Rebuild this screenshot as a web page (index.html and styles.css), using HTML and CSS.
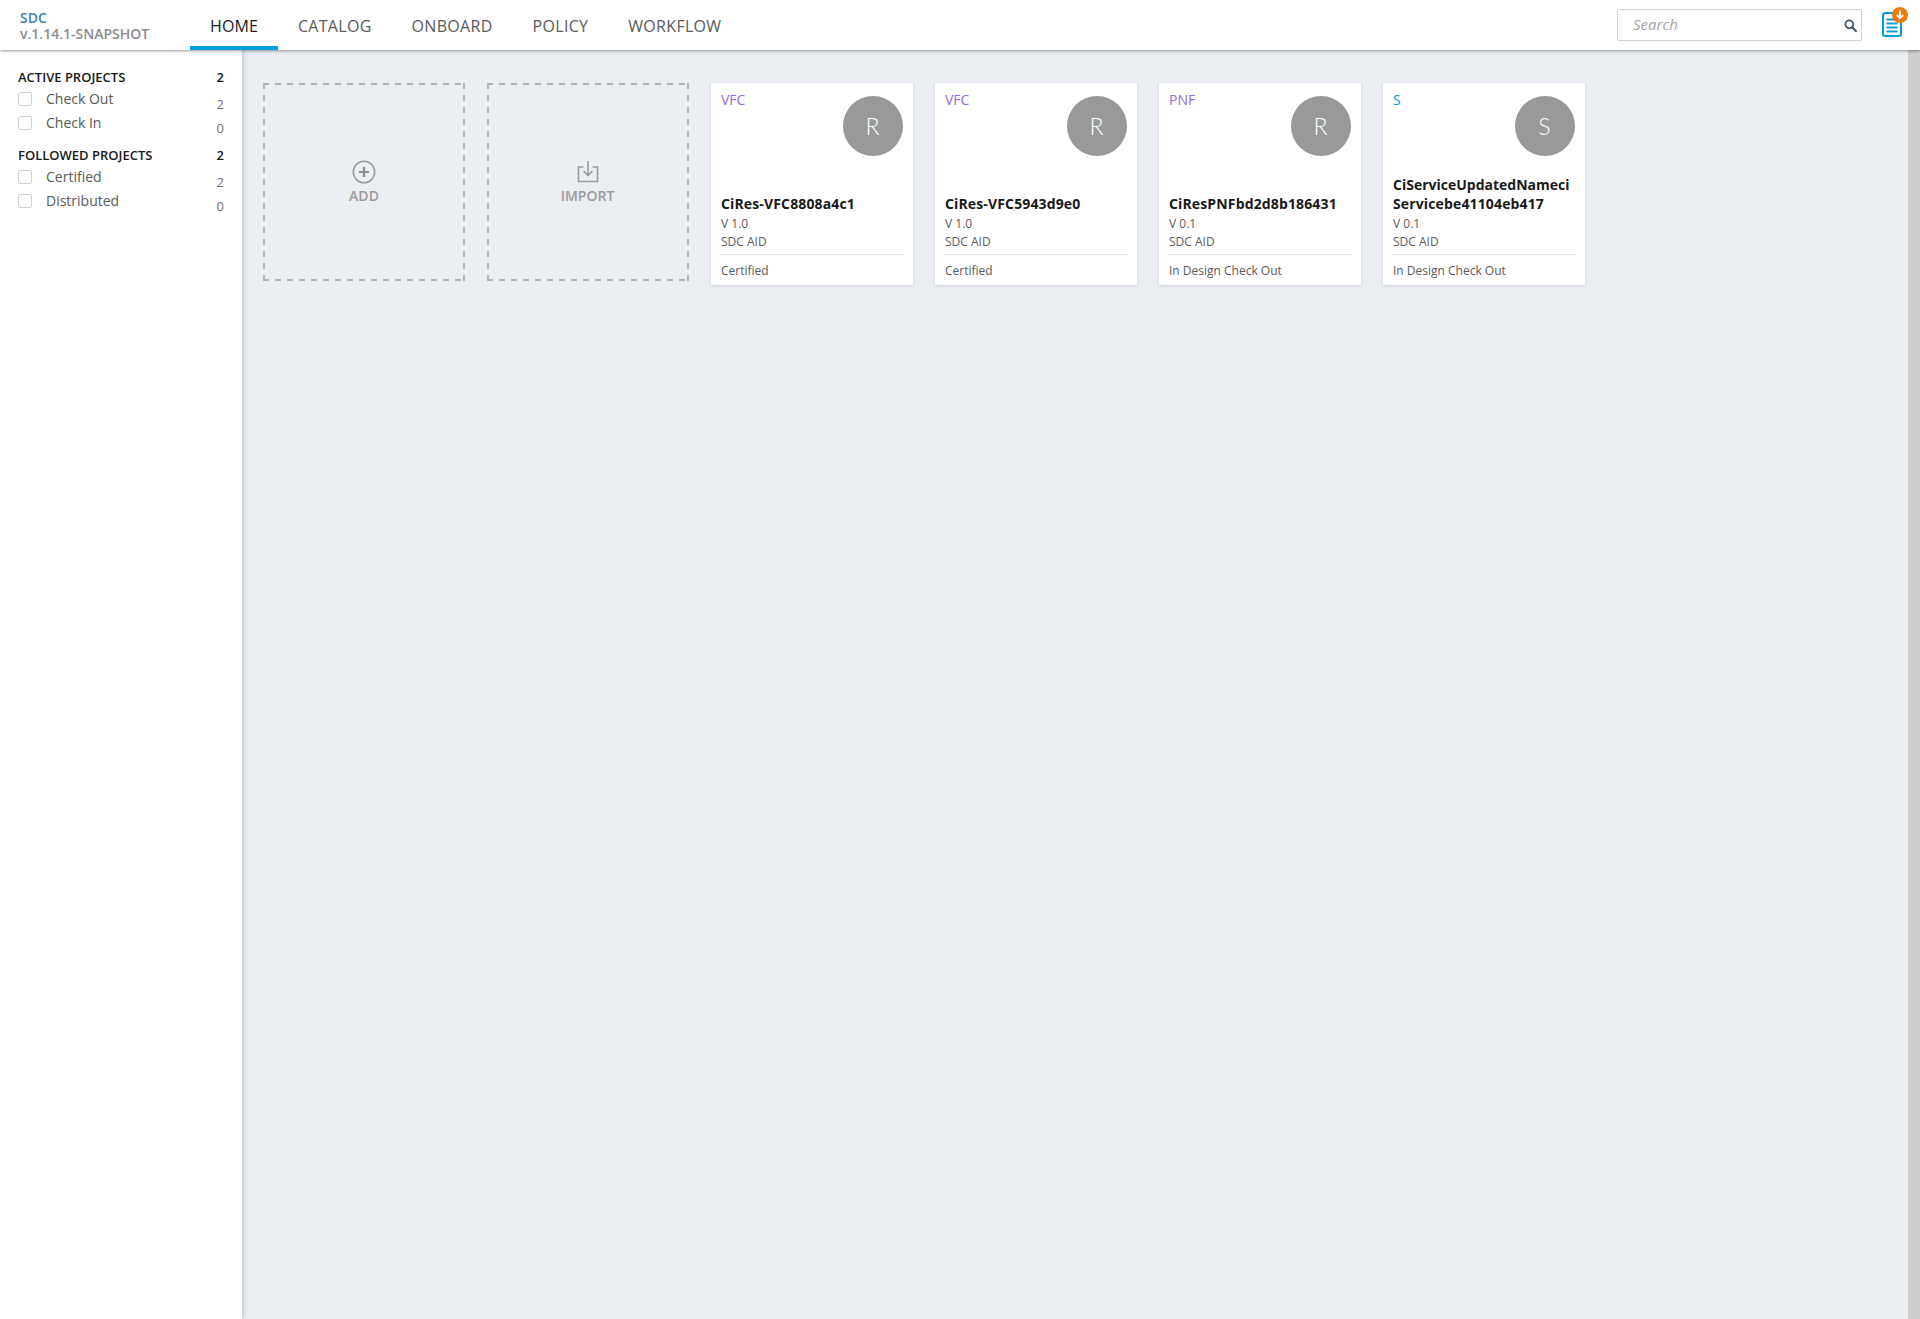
FILE: index.html
```html
<!DOCTYPE html>
<html lang="en">
<head>
<meta charset="utf-8">
<title>SDC</title>
<link rel="stylesheet" href="styles.css">
</head>
<body>
<header class="topbar">
  <div class="brand">
    <div class="brand-name">SDC</div>
    <div class="brand-version">v.1.14.1-SNAPSHOT</div>
  </div>
  <nav class="nav">
    <a class="nav-item active">HOME</a>
    <a class="nav-item">CATALOG</a>
    <a class="nav-item">ONBOARD</a>
    <a class="nav-item">POLICY</a>
    <a class="nav-item">WORKFLOW</a>
  </nav>
  <div class="search">
    <span class="search-text">Search</span>
    <svg class="search-icon" width="13" height="13" viewBox="0 0 13 13"><circle cx="5.3" cy="5.3" r="3.9" fill="none" stroke="#3f5365" stroke-width="1.8"/><path d="M8.3 8.3l3.6 3.6" stroke="#3f5365" stroke-width="2.1" stroke-linecap="round"/></svg>
  </div>
  <div class="notify">
    <svg width="28" height="30" viewBox="0 0 28 30">
      <rect x="1" y="6" width="18" height="23" rx="2.5" fill="#fff" stroke="#009fdb" stroke-width="2"/>
      <path d="M4.5 12.5h11M4.5 16.5h11M4.5 20.5h11M4.5 24.5h11" stroke="#009fdb" stroke-width="2"/>
      <circle cx="18" cy="8" r="8" fill="#ec7a0c"/>
      <path d="M18 3.5v7.5M14.8 8l3.2 3.2L21.2 8" fill="none" stroke="#fff" stroke-width="1.8"/>
    </svg>
  </div>
</header>
<div class="layout">
  <aside class="sidebar">
    <section class="filter-group">
      <div class="filter-title"><span>ACTIVE PROJECTS</span><span>2</span></div>
      <div class="filter-row"><span class="check"></span><span class="filter-label">Check Out</span><span class="count">2</span></div>
      <div class="filter-row"><span class="check"></span><span class="filter-label">Check In</span><span class="count">0</span></div>
    </section>
    <section class="filter-group">
      <div class="filter-title"><span>FOLLOWED PROJECTS</span><span>2</span></div>
      <div class="filter-row"><span class="check"></span><span class="filter-label">Certified</span><span class="count">2</span></div>
      <div class="filter-row"><span class="check"></span><span class="filter-label">Distributed</span><span class="count">0</span></div>
    </section>
  </aside>
  <main class="content">
    <div class="tile">
      <svg class="tile-icon" width="24" height="24" viewBox="0 0 24 24"><circle cx="12" cy="12" r="10.7" fill="none" stroke="#9b9b9b" stroke-width="1.6"/><path d="M12 7v10M7 12h10" stroke="#8f8f8f" stroke-width="2.2"/></svg>
      <span class="tile-label">ADD</span>
    </div>
    <div class="tile">
      <svg class="tile-icon tile-icon-import" width="24" height="24" viewBox="0 0 24 24"><path d="M7.500 7H2.500v14.500h19V7h-5" fill="none" stroke="#9b9b9b" stroke-width="1.6"/><path d="M12 1v14M7.500 11l4.500 4.500 4.500-4.500" fill="none" stroke="#9b9b9b" stroke-width="1.6"/></svg>
      <span class="tile-label tile-label-import">IMPORT</span>
    </div>
    <article class="card">
      <div class="card-top"><span class="type type-res">VFC</span><span class="avatar">R</span></div>
      <div class="card-name">CiRes-VFC8808a4c1</div>
      <div class="card-meta">V 1.0</div>
      <div class="card-meta">SDC AID</div>
      <div class="card-status">Certified</div>
    </article>
    <article class="card">
      <div class="card-top"><span class="type type-res">VFC</span><span class="avatar">R</span></div>
      <div class="card-name">CiRes-VFC5943d9e0</div>
      <div class="card-meta">V 1.0</div>
      <div class="card-meta">SDC AID</div>
      <div class="card-status">Certified</div>
    </article>
    <article class="card">
      <div class="card-top"><span class="type type-res">PNF</span><span class="avatar">R</span></div>
      <div class="card-name">CiResPNFbd2d8b186431</div>
      <div class="card-meta">V 0.1</div>
      <div class="card-meta">SDC AID</div>
      <div class="card-status">In Design Check Out</div>
    </article>
    <article class="card">
      <div class="card-top"><span class="type type-svc">S</span><span class="avatar">S</span></div>
      <div class="card-name"><span class="name-tight">CiServiceUpdatedNameci</span><br>Servicebe41104eb417</div>
      <div class="card-meta">V 0.1</div>
      <div class="card-meta">SDC AID</div>
      <div class="card-status">In Design Check Out</div>
    </article>
  </main>
  <div class="scrollbar"></div>
</div>
</body>
</html>
```
FILE: styles.css
```css
* { box-sizing: border-box; }
html, body { margin: 0; height: 100%; overflow: hidden; }
body { font-family: "Open Sans", sans-serif; background: #ebeef3; color: #5a5a5a; display: flex; flex-direction: column; }

.topbar { height: 50px; flex: none; background: #fff; display: flex; align-items: stretch; box-shadow: 0 1px 3px rgba(0,0,0,.4); position: relative; z-index: 2; }
.brand { width: 190px; padding: 10px 0 0 20px; line-height: 15px; }
.brand-name { font-size: 14px; font-weight: 600; color: #3a7fbd; }
.brand-version { font-size: 14px; font-weight: 600; margin-top: 1px; color: #8c8c8c; }
.nav { display: flex; flex: 1; }
.nav-item { padding: 15px 20px 0; font-size: 16px; line-height: 22px; letter-spacing: .3px; color: #5a5a5a; border-bottom: 4px solid transparent; }
.nav-item.active { color: #191919; border-bottom-color: #009fdb; letter-spacing: .1px; }
.search { width: 245px; height: 32px; margin: 9px 0 0; border: 1px solid #d2d2d2; border-radius: 2px; display: flex; align-items: center; justify-content: space-between; padding: 0 4px 2px 15px; }
.search-text { font-size: 15px; font-style: italic; color: #a3a3a3; }
.search-icon { display: block; margin-top: 2px; }
.notify { width: 58px; padding: 7px 0 0 20px; }
.notify svg { display: block; }

.layout { flex: 1; display: flex; min-height: 0; }
.sidebar { width: 242px; flex: none; background: #fff; box-shadow: 1px 0 5px rgba(0,0,0,.2); padding: 18px 18px 0; }
.filter-group { margin-bottom: 11px; }
.filter-title { display: flex; justify-content: space-between; margin-bottom: 1px; font-size: 13px; font-weight: 600; line-height: 18px; color: #191919; }
.filter-row { display: flex; height: 24px; font-size: 14px; line-height: 24px; color: #5a5a5a; }
.check { width: 14px; height: 14px; margin-top: 5px; border: 1px solid #d2d2d2; border-radius: 2px; background: #fff; flex: none; }
.filter-label { margin-left: 14px; flex: 1; }
.count { font-size: 13px; line-height: 24px; padding-top: 5px; color: #6e6e6e; }

.content { flex: 1; display: flex; align-items: flex-start; gap: 22px; padding: 33px 0 0 21px; }
.tile {
  width: 202px; height: 198px;
  display: flex; flex-direction: column; align-items: center; padding-top: 77px;
  background-image:
    linear-gradient(90deg, #aeb5b8 6px, transparent 6px),
    linear-gradient(90deg, #aeb5b8 6px, transparent 6px),
    linear-gradient(180deg, #aeb5b8 6px, transparent 6px),
    linear-gradient(180deg, #aeb5b8 6px, transparent 6px);
  background-size: 12px 2px, 12px 2px, 2px 12px, 2px 12px;
  background-position: 0 0, 0 100%, 0 0, 100% 0;
  background-repeat: repeat-x, repeat-x, repeat-y, repeat-y;
}
.tile-icon { display: block; }
.tile-icon-import { margin-left: -1px; }
.tile-label { font-size: 14px; font-weight: 600; line-height: 20px; margin-top: 2px; color: #9b9b9b; }
.tile-label-import { margin-left: -1px; }
.card { width: 202px; height: 202px; background: #fff; box-shadow: 0 1px 4px rgba(0,0,0,.1); padding: 0 10px; display: flex; flex-direction: column; position: relative; }
.card-top { flex: 1; padding-top: 7px; display: flex; justify-content: space-between; align-items: flex-start; }
.type { font-size: 14px; line-height: 20px; }
.type-res { color: #9a6bdc; }
.type-svc { color: #009fdb; }
.avatar { width: 60px; height: 60px; margin-top: 6px; padding-right: 1px; border-radius: 50%; background: #999; color: #fff; font-family: "Lato", sans-serif; font-size: 23px; font-weight: 300; line-height: 60px; text-align: center; }
.card-name { font-size: 14px; font-weight: 700; line-height: 19px; letter-spacing: .14px; color: #191919; margin-bottom: 2px; }
.name-tight { letter-spacing: 0; }
.card-meta { font-size: 12px; line-height: 18px; color: #5a5a5a; }
.card-status { margin-top: 3px; height: 31px; border-top: 1px solid #e6e6e6; font-size: 12px; line-height: 31px; color: #5a5a5a; }
.scrollbar { width: 12px; flex: none; background: #cdcdcd; }
```
